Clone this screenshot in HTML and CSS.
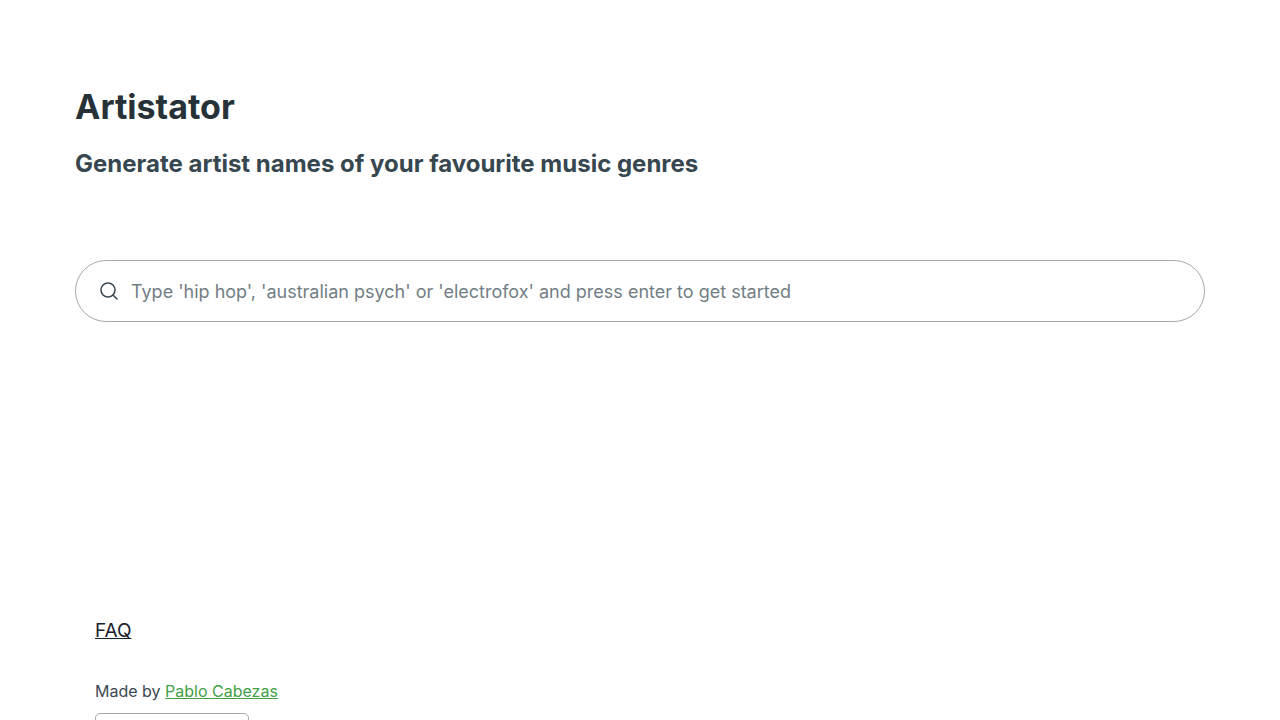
FILE: index.html
```html
<!DOCTYPE html>
<html lang="en">
<head>
<meta charset="utf-8">
<meta name="viewport" content="width=device-width, initial-scale=1">
<title>Artistator</title>
<link rel="stylesheet" href="styles.css">
</head>
<body>
<main class="page">
  <header>
    <h1 class="title">Artistator</h1>
    <h2 class="subtitle">Generate artist names of your favourite music genres</h2>
  </header>
  <form class="search" role="search">
    <svg class="search-icon" viewBox="0 0 18 18" aria-hidden="true"><circle cx="8" cy="8" r="7"/><path d="M13 13l4 4"/></svg>
    <input class="search-input" type="search" aria-label="Music genre" placeholder="Type 'hip hop', 'australian psych' or 'electrofox' and press enter to get started">
  </form>
</main>
<footer class="footer">
  <a class="faq" href="#faq">FAQ</a>
  <p class="credit">Made by <a class="author" href="#author">Pablo Cabezas</a></p>
  <button class="badge" type="button" aria-label="Support"></button>
</footer>
</body>
</html>
```
FILE: styles.css
```css
* { box-sizing: border-box; }
body {
  margin: 0;
  height: 100vh;
  background: #fff;
  color: #3c4953;
  font-family: Inter, "Liberation Sans", sans-serif;
  overflow: hidden;
}
.page { padding: 80px 75px 0; }
.title {
  margin: 0;
  color: #263238;
  font-size: 34px;
  line-height: 54px;
  font-weight: 700;
}
.subtitle {
  margin: 10px 0 0;
  color: #37474f;
  font-size: 24px;
  line-height: 40px;
  font-weight: 700;
}
.search {
  display: flex;
  align-items: center;
  gap: 13px;
  height: 62px;
  margin-top: 76px;
  padding: 0 24px;
  border: 1px solid #a5a9ab;
  border-radius: 31px;
}
.search-icon {
  width: 18px;
  height: 18px;
  fill: none;
  stroke: #3c4953;
  stroke-width: 1.6;
  stroke-linecap: round;
}
.search-input {
  flex: 1;
  min-width: 0;
  padding: 2px 0 0;
  border: 0;
  outline: 0;
  background: none;
  color: #263238;
  font: 18px/30px Inter, "Liberation Sans", sans-serif;
}
.search-input::placeholder { color: #727e85; opacity: 1; }
.footer { padding: 293px 95px 0; }
.faq {
  display: block;
  width: fit-content;
  color: #1a202c;
  font-size: 19px;
  line-height: 32px;
}
.credit {
  margin: 32px 0 0;
  font-size: 16px;
  line-height: 24px;
}
.author { color: #43a047; }
.badge {
  display: block;
  width: 154px;
  height: 40px;
  margin-top: 10px;
  border: 1px solid #a5a9ab;
  border-radius: 5px;
  background: #fff;
}
```
